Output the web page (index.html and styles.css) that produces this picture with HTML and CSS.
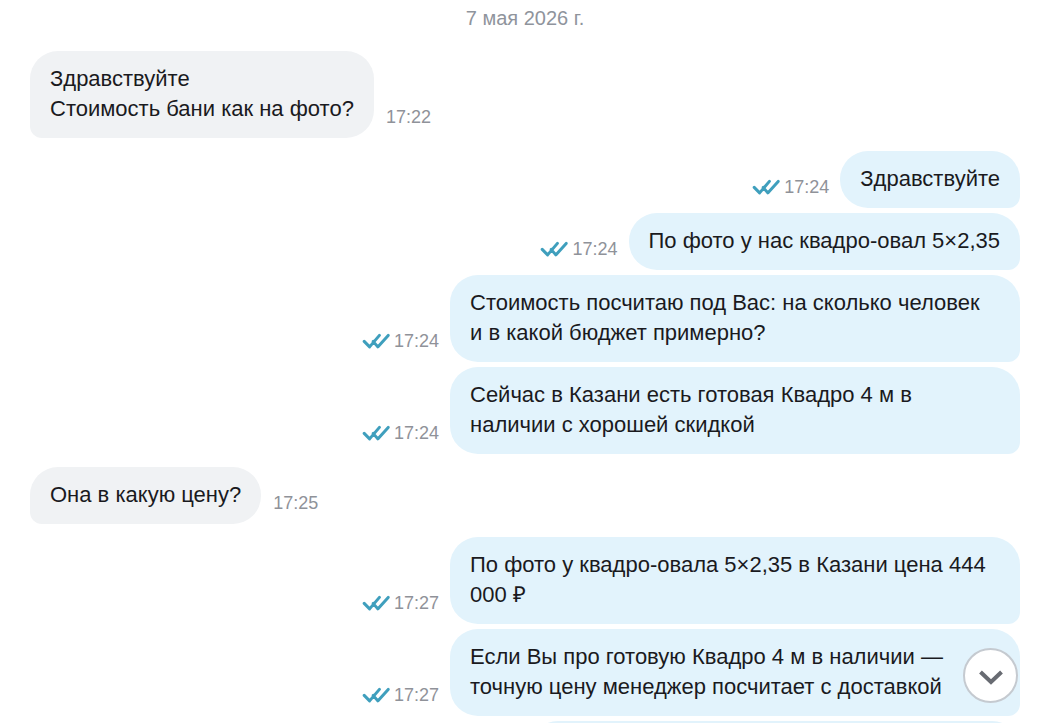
FILE: index.html
```html
<!DOCTYPE html>
<html lang="ru">
<head>
<meta charset="utf-8">
<meta name="viewport" content="width=device-width, initial-scale=1">
<title>Чат</title>
<link rel="stylesheet" href="styles.css">
</head>
<body>
<svg class="sprite" aria-hidden="true">
  <symbol id="read" viewBox="0 0 28 18">
    <path d="M2.2 9.4 7.6 14.9 17.4 3.4M11.2 9.4 15.8 14.9 26.2 3.4"/>
  </symbol>
</svg>
<main class="chat">
  <h2 class="date">7 мая 2026 г.</h2>
  <section class="group">
    <article class="message">
      <p class="bubble">Здравствуйте<br>Стоимость бани как на фото?</p>
      <div class="meta"><time>17:22</time></div>
    </article>
  </section>
  <section class="group">
    <article class="message own">
      <p class="bubble">Здравствуйте</p>
      <div class="meta"><svg class="read"><use href="#read"/></svg><time>17:24</time></div>
    </article>
    <article class="message own">
      <p class="bubble">По фото у нас квадро-овал 5×2,35</p>
      <div class="meta"><svg class="read"><use href="#read"/></svg><time>17:24</time></div>
    </article>
    <article class="message own">
      <p class="bubble">Стоимость посчитаю под Вас: на сколько человек и&nbsp;в&nbsp;какой бюджет примерно?</p>
      <div class="meta"><svg class="read"><use href="#read"/></svg><time>17:24</time></div>
    </article>
    <article class="message own">
      <p class="bubble">Сейчас в Казани есть готовая Квадро 4 м в наличии с хорошей скидкой</p>
      <div class="meta"><svg class="read"><use href="#read"/></svg><time>17:24</time></div>
    </article>
  </section>
  <section class="group">
    <article class="message">
      <p class="bubble">Она в какую цену?</p>
      <div class="meta"><time>17:25</time></div>
    </article>
  </section>
  <section class="group">
    <article class="message own">
      <p class="bubble">По фото у квадро-овала 5×2,35 в Казани цена 444 000 ₽</p>
      <div class="meta"><svg class="read"><use href="#read"/></svg><time>17:27</time></div>
    </article>
    <article class="message own">
      <p class="bubble">Если Вы про готовую Квадро 4 м в наличии — точную цену менеджер посчитает с доставкой</p>
      <div class="meta"><svg class="read"><use href="#read"/></svg><time>17:27</time></div>
    </article>
    <article class="message own">
      <p class="bubble next"></p>
    </article>
  </section>
  <button class="down" type="button" aria-label="Вниз">
    <svg viewBox="0 0 24 16"><path d="M1.5 3 12 13 22.5 3"/></svg>
  </button>
</main>
</body>
</html>
```
FILE: styles.css
```css
* { box-sizing: border-box; }

body {
  margin: 0;
  background: #fff;
  color: #1a1a1e;
  font-family: "Liberation Sans", Arial, sans-serif;
  font-size: 22px;
  line-height: 30px;
}

.sprite { display: none; }

.chat {
  position: relative;
  display: flex;
  flex-direction: column;
  gap: 13px;
  height: 100vh;
  padding: 6px 30px 0;
  overflow: hidden;
}

.date {
  margin: 0 0 8px;
  color: #8f949c;
  font-size: 20px;
  font-weight: 400;
  line-height: 24px;
  text-align: center;
}

.group {
  display: flex;
  flex-direction: column;
  gap: 5px;
}

.message {
  display: flex;
  align-items: flex-end;
  gap: 12px;
}

.own { flex-direction: row-reverse; }

.bubble {
  max-width: 570px;
  margin: 0;
  padding: 13px 20px 14px;
  border-radius: 28px 28px 28px 12px;
  background: #f0f2f4;
}

.own .bubble {
  border-radius: 28px 28px 12px 28px;
  background: #e2f3fc;
}

.next {
  width: 490px;
  min-height: 57px;
}

.meta {
  display: flex;
  align-items: center;
  gap: 4px;
  margin-bottom: 9px;
  color: #8f9299;
  font-size: 18px;
  line-height: 24px;
}

.own .meta { margin-right: -1px; }

.read {
  width: 28px;
  height: 18px;
  fill: none;
  stroke: #3f9fbd;
  stroke-width: 3;
  stroke-linecap: round;
  stroke-linejoin: round;
}

.down {
  position: absolute;
  right: 32px;
  bottom: 20px;
  display: grid;
  place-items: center;
  width: 55px;
  height: 55px;
  padding: 2px 0 0;
  border: 2px solid #c5cad0;
  border-radius: 50%;
  background: #fff;
}

.down svg {
  width: 24px;
  height: 16px;
  fill: none;
  stroke: #686b72;
  stroke-width: 4;
}
```
